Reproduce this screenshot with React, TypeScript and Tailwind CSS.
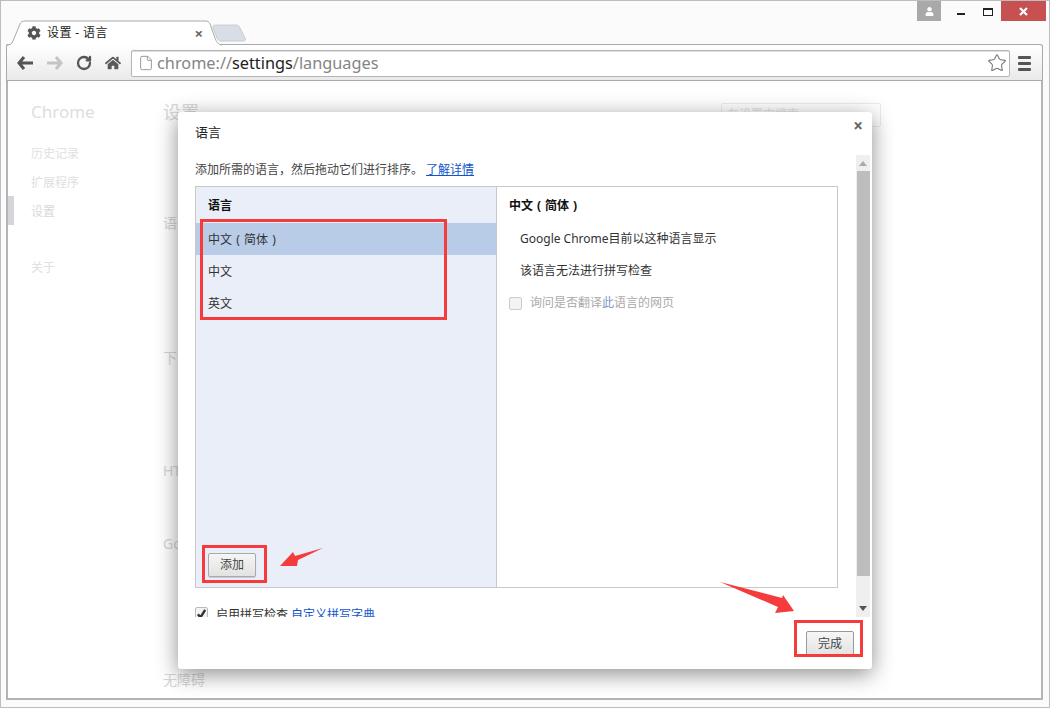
import { File, RotateCw, Star } from "lucide-react";
import { FaCog, FaHome, FaUser } from "react-icons/fa";

const cjk = { fontFamily: '"Noto Sans", "Noto Sans CJK SC", sans-serif' };

const RedBox = ({ className }: { className: string }) => (
  <div className={`absolute border-[3px] border-[#f53b3b] ${className}`} />
);

// the screenshot's font centres the brackets in their full-width cell
const Paren = ({ children }: { children: string }) => (
  <span className="inline-block w-[12px] text-center">{children}</span>
);

const SimplifiedChinese = () => (
  <>
    中文<Paren>(</Paren>简体<Paren>)</Paren>
  </>
);

const Toolbar = () => (
  <div className="h-[37px] ml-[5px] mr-[6px] border border-b-0 border-[#aaa] rounded-t-[3px] bg-gradient-to-b from-white to-[#e9e9e9] flex items-center pl-[7px] pr-[7px] shadow-[inset_0_-1px_0_#aaa]">
    <svg width="17" height="14" viewBox="0 0 17 14" className="ml-[3px]">
      <path d="M7 1 2 7l5 6M2.5 7H16" fill="none" stroke="#555" strokeWidth="3" />
    </svg>
    <svg width="17" height="14" viewBox="0 0 17 14" className="ml-[12px]">
      <path d="M10 1l5 6-5 6M14.5 7H1" fill="none" stroke="#c4c4c4" strokeWidth="3" />
    </svg>
    <RotateCw size={16} strokeWidth={3.4} color="#555" className="ml-[13px]" />
    <FaHome size={16} color="#5a5a5a" className="ml-[13px]" />
    <div className="ml-[10px] w-[879px] h-[27px] bg-white border border-[#b5b5b5] rounded-[2px] flex items-center pl-[6px] shadow-[inset_0_1px_0_#ddd]">
      <File size={16} color="#999" strokeWidth={1.5} />
      <div className="ml-[3px] text-[16.3px] text-[#858585] whitespace-nowrap" style={cjk}>
        chrome://<span className="text-[#222]">settings</span>/languages
      </div>
      <Star size={20} color="#777" strokeWidth={1.3} className="ml-auto mr-[2px]" />
    </div>
    <div className="ml-[8px] flex flex-col gap-[3px]">
      <div className="w-[13px] h-[3px] bg-[#555] rounded-[1px]" />
      <div className="w-[13px] h-[3px] bg-[#555] rounded-[1px]" />
      <div className="w-[13px] h-[3px] bg-[#555] rounded-[1px]" />
    </div>
  </div>
);

const Background = () => (
  <div className="ml-[5px] mr-[6px] h-[619px] border-x-2 border-b-2 border-[#b4b4b4] border-t-0 bg-white flex relative">
    <div className="w-[155px] pl-[23px] pt-[20px]">
      <div className="text-[17px] leading-[22px] text-[#dedede]">Chrome</div>
      <div className="mt-[16px] text-[12px] leading-[29px] text-[#e0e0e0]">
        <div>历史记录</div>
        <div>扩展程序</div>
        <div className="text-[#d8d8d8]">设置</div>
        <div className="mt-[27px]">关于</div>
      </div>
    </div>
    <div className="text-[#d6d6d6] text-[14px]">
      <div className="text-[18px] leading-[22px] mt-[20px] text-[#d8d8d8]">设置</div>
      <div className="mt-[88px] leading-[24px]">语</div>
      <div className="mt-[111px] leading-[24px]">下</div>
      <div className="mt-[89px] leading-[24px]">HT</div>
      <div className="mt-[49px] leading-[24px]">Go</div>
      <div className="mt-[112px] leading-[24px]">无障碍</div>
    </div>
    <div className="absolute left-[713px] top-[22px] w-[160px] h-[24px] border border-[#ececec] rounded-[2px] text-[12px] leading-[22px] pl-[5px] text-[#e4e4e4]">
      在设置中搜索
    </div>
    <div className="absolute left-0 top-[115px] w-[6px] h-[29px] bg-[#d6d6da]" />
  </div>
);

const LanguageDialog = () => (
  <div className="absolute left-[177px] top-[111px] w-[694px] h-[557px] bg-white rounded-[3px] shadow-[0_5px_22px_rgba(0,0,0,0.45)] flex flex-col text-[12px] text-[#333]">
    <div className="h-[43px] pl-[17px] pr-[9px] flex items-start justify-between">
      <span className="text-[13px] mt-[11px] text-[#222]">语言</span>
      <span className="text-[17px] leading-[20px] mt-[4px] font-bold text-[#666]">×</span>
    </div>
    <div className="h-[462px] flex overflow-hidden">
      <div className="w-[660px] pl-[17px]">
        <div className="h-[31px] pb-[2px] flex items-center text-[#444]">
          添加所需的语言，然后拖动它们进行排序。
          <a href="#" className="ml-[3px] text-[#1155cc] underline">了解详情</a>
        </div>
        <div className="h-[402px] border border-[#c8c8c8] flex">
          <div className="w-[301px] border-r border-[#c8c8c8] bg-[#e9eef8] flex flex-col">
            <div className="h-[36px] pl-[12px] pt-[2px] flex items-center font-bold text-[#111]">语言</div>
            <div className="h-[32px] pl-[12px] pt-[2px] flex items-center bg-[#b8cce8]"><span><SimplifiedChinese /></span></div>
            <div className="h-[32px] pl-[12px] pt-[2px] flex items-center">中文</div>
            <div className="h-[32px] pl-[12px] pt-[2px] flex items-center">英文</div>
            <button className="mt-auto mb-[10px] ml-[12px] w-[48px] h-[24px] border border-[#aaa] rounded-[2px] bg-gradient-to-b from-[#f6f6f6] to-[#e2e2e2] text-[#444] text-[12px] shadow-[0_1px_1px_rgba(0,0,0,0.15)]">
              添加
            </button>
          </div>
          <div className="flex-1 bg-white">
            <div className="h-[36px] pl-[12px] pt-[2px] flex items-center font-bold text-[#111]"><span><SimplifiedChinese /></span></div>
            <div className="h-[32px] pl-[23px] flex items-center">Google Chrome目前以这种语言显示</div>
            <div className="h-[32px] pl-[23px] flex items-center">该语言无法进行拼写检查</div>
            <div className="h-[32px] pl-[12px] flex items-center text-[#aaa]">
              <span className="w-[13px] h-[13px] border border-[#ccc] rounded-[2px] bg-[#f3f3f3]" />
              <span className="ml-[8px]">询问是否翻译<span className="text-[#7f93c4]">此</span>语言的网页</span>
            </div>
          </div>
        </div>
        {/* sits under the fold of the scroller, cut off as in the screenshot */}
        <div className="mt-[18px] flex items-center h-[18px]">
          <span className="-mt-[3px] w-[13px] h-[13px] border border-[#bbb] rounded-[2px] bg-[#f3f3f3] flex items-center justify-center">
            <svg width="12" height="12" viewBox="0 0 12 12">
              <path d="M2 6.5l3 3 5-8" fill="none" stroke="#333" strokeWidth="2.6" />
            </svg>
          </span>
          <span className="ml-[8px]">启用拼写检查</span>
          <a href="#" className="ml-[3px] text-[#1155cc]">自定义拼写字典</a>
        </div>
      </div>
      <div className="ml-[18px] w-[14px] h-full bg-[#efefef] flex flex-col items-center">
        <div className="h-[16px] flex items-center">
          <svg width="8" height="5" viewBox="0 0 8 5"><path d="M4 0l4 5H0z" fill="#aaa" /></svg>
        </div>
        <div className="w-[13px] h-[405px] ml-[1px] bg-[#bdbdbd]" />
        <div className="mt-auto h-[18px] flex items-center">
          <svg width="8" height="5" viewBox="0 0 8 5"><path d="M4 5l4-5H0z" fill="#555" /></svg>
        </div>
      </div>
    </div>
    <div className="flex-1 flex justify-end pr-[18px] pt-[14px]">
      <button className="w-[48px] h-[26px] border border-[#999] rounded-[2px] bg-gradient-to-b from-[#f6f6f6] to-[#e2e2e2] text-[#444] text-[12px]">
        完成
      </button>
    </div>
  </div>
);

const App = () => {
  return (
    <div className="relative w-[1050px] h-[708px] overflow-hidden bg-[#fbfbfb] border border-[#bdbdbd]" style={cjk}>
      {/* tab strip */}
      <div className="h-[43px] relative z-10">
        <svg width="245" height="26" viewBox="0 0 245 26" className="absolute left-[4px] top-[19px]">
          <path d="M212 5h19c2 0 3 1 4 3l5 10c1 2 0 3-2 3h-22c-2 0-3-1-4-3l-4-10c-1-2 1-3 4-3z" fill="#d8dde6" stroke="#c8ccd4" />
          <path d="M1 25c4 0 6-1 7-4l7-17c1-2 2-3 5-3h180c3 0 4 1 5 3l5 14c1 3 3 7 7 7" fill="#fff" stroke="#aaa" />
        </svg>
        <div className="absolute left-[26px] top-[23px] w-[176px] flex items-center text-[12px] leading-[18px] text-[#222]">
          <FaCog size={14} color="#555" />
          <span className="ml-[6px] tracking-[0.4px]">设置 - 语言</span>
          <span className="ml-auto text-[15px] font-bold text-[#666]">×</span>
        </div>
        <div className="absolute right-[3px] top-0 flex items-start">
          <div className="w-[24px] h-[20px] bg-[#a9a9a9] flex items-center justify-center">
            <FaUser size={9} color="#fff" />
          </div>
          <div className="w-[60px] h-[20px] relative">
            <div className="absolute left-[16px] top-[12px] w-[8px] h-[2px] bg-[#222]" />
            <div className="absolute left-[42px] top-[7px] w-[10px] h-[8px] border border-t-2 border-[#222]" />
          </div>
          <div className="w-[45px] h-[20px] bg-[#c75050] flex items-center justify-center">
            <svg width="9" height="9" viewBox="0 0 9 9">
              <path d="M1 1l7 7M8 1l-7 7" fill="none" stroke="#fff" strokeWidth="2.2" />
            </svg>
          </div>
        </div>
      </div>
      <Toolbar />
      <Background />
      <LanguageDialog />

      {/* annotations */}
      <RedBox className="left-[199px] top-[218px] w-[247px] h-[101px]" />
      <RedBox className="left-[201px] top-[544px] w-[65px] h-[38px]" />
      <RedBox className="left-[793px] top-[619px] w-[69px] h-[37px]" />
      <svg width="1050" height="708" viewBox="0 0 1050 708" className="absolute left-[-1px] top-[-1px] pointer-events-none">
        <path d="M280 566l13-14 2 4 28-8-25 12-1 6z" fill="#f53b3b" />
        <path d="M720 582l62 16 1-3 11 16-19 2 3-6z" fill="#f53b3b" />
      </svg>
    </div>
  );
};

export default App;
